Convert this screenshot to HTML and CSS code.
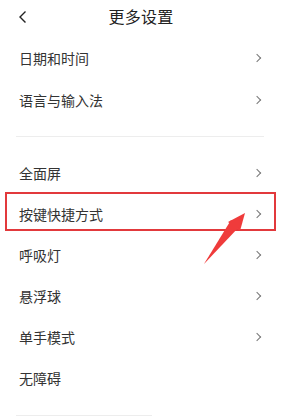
FILE: index.html
```html
<!DOCTYPE html>
<html lang="zh-CN">
<head>
    <meta charset="UTF-8">
    <meta name="viewport" content="width=device-width, initial-scale=1.0">
    <title>更多设置</title>
    <link rel="stylesheet" href="styles.css">
</head>
<body>
    <div class="page">
        <div class="header">
            <span class="back">
                <svg width="10" height="14" viewBox="0 0 10 14"><path d="M7.5 1.5 L2 7 L7.5 12.5" fill="none" stroke="#222" stroke-width="1.4"/></svg>
            </span>
            <h1>更多设置</h1>
        </div>

        <div class="group group-top">
            <div class="row"><span>日期和时间</span><i class="chev"></i></div>
            <div class="row"><span>语言与输入法</span><i class="chev"></i></div>
        </div>

        <div class="divider"></div>

        <div class="group">
            <div class="row"><span>全面屏</span><i class="chev"></i></div>
            <div class="row"><span>按键快捷方式</span><i class="chev"></i></div>
            <div class="row"><span>呼吸灯</span><i class="chev"></i></div>
            <div class="row"><span>悬浮球</span><i class="chev"></i></div>
            <div class="row"><span>单手模式</span><i class="chev"></i></div>
            <div class="row"><span>无障碍</span></div>
        </div>

        <div class="divider divider-short"></div>

        <!-- annotation overlay -->
        <div class="mark-box"></div>
        <svg class="mark-arrow" width="282" height="419" viewBox="0 0 282 419">
            <path d="M204 264 L234 222 L236 224 Z" fill="#ef3b3b"/>
            <path d="M245 213 L228 222 L240 231 Z" fill="#ef3b3b"/>
            <path d="M204 264 L231 220 L239 227 Z" fill="#ef3b3b"/>
        </svg>
    </div>
</body>
</html>
```

FILE: styles.css
```css
/* Base */
body {
    margin: 0;
    background: #fff;
    font-family: "Noto Sans CJK SC", "Noto Sans", sans-serif;
    color: #333;
}

.page {
    position: relative;
    width: 282px;
    height: 419px;
    overflow: hidden;
    background: #fff;
}

/* Header */
.header {
    height: 32px;
    display: flex;
    align-items: center;
    justify-content: center;
    position: relative;
}

.header h1 {
    margin: 0;
    font-size: 16px;
    font-weight: 400;
    color: #222;
    letter-spacing: 0.2px;
}

.back {
    position: absolute;
    left: 18px;
    top: 10px;
    display: flex;
}

/* List */
.group-top {
    margin-top: 5px;
}

.group-top .row {
    height: 42px;
}

.row {
    height: 41px;
    display: flex;
    align-items: center;
    justify-content: space-between;
    padding: 0 20px 0 19px;
    font-size: 14px;
    color: #333;
}

.chev {
    width: 5px;
    height: 5px;
    border-top: 1.2px solid #777;
    border-right: 1.2px solid #777;
    transform: rotate(45deg);
    margin-right: 2px;
}

.divider {
    height: 1px;
    background: #ededed;
    margin: 15px 18px 15px 16px;
}

.divider-short {
    margin: 17px 0 0 16px;
    width: 136px;
}

/* Annotation */
.mark-box {
    position: absolute;
    left: 5px;
    top: 192px;
    width: 267px;
    height: 35px;
    border: 2px solid #e2393c;
}

.mark-arrow {
    position: absolute;
    left: 0;
    top: 0;
}
```
